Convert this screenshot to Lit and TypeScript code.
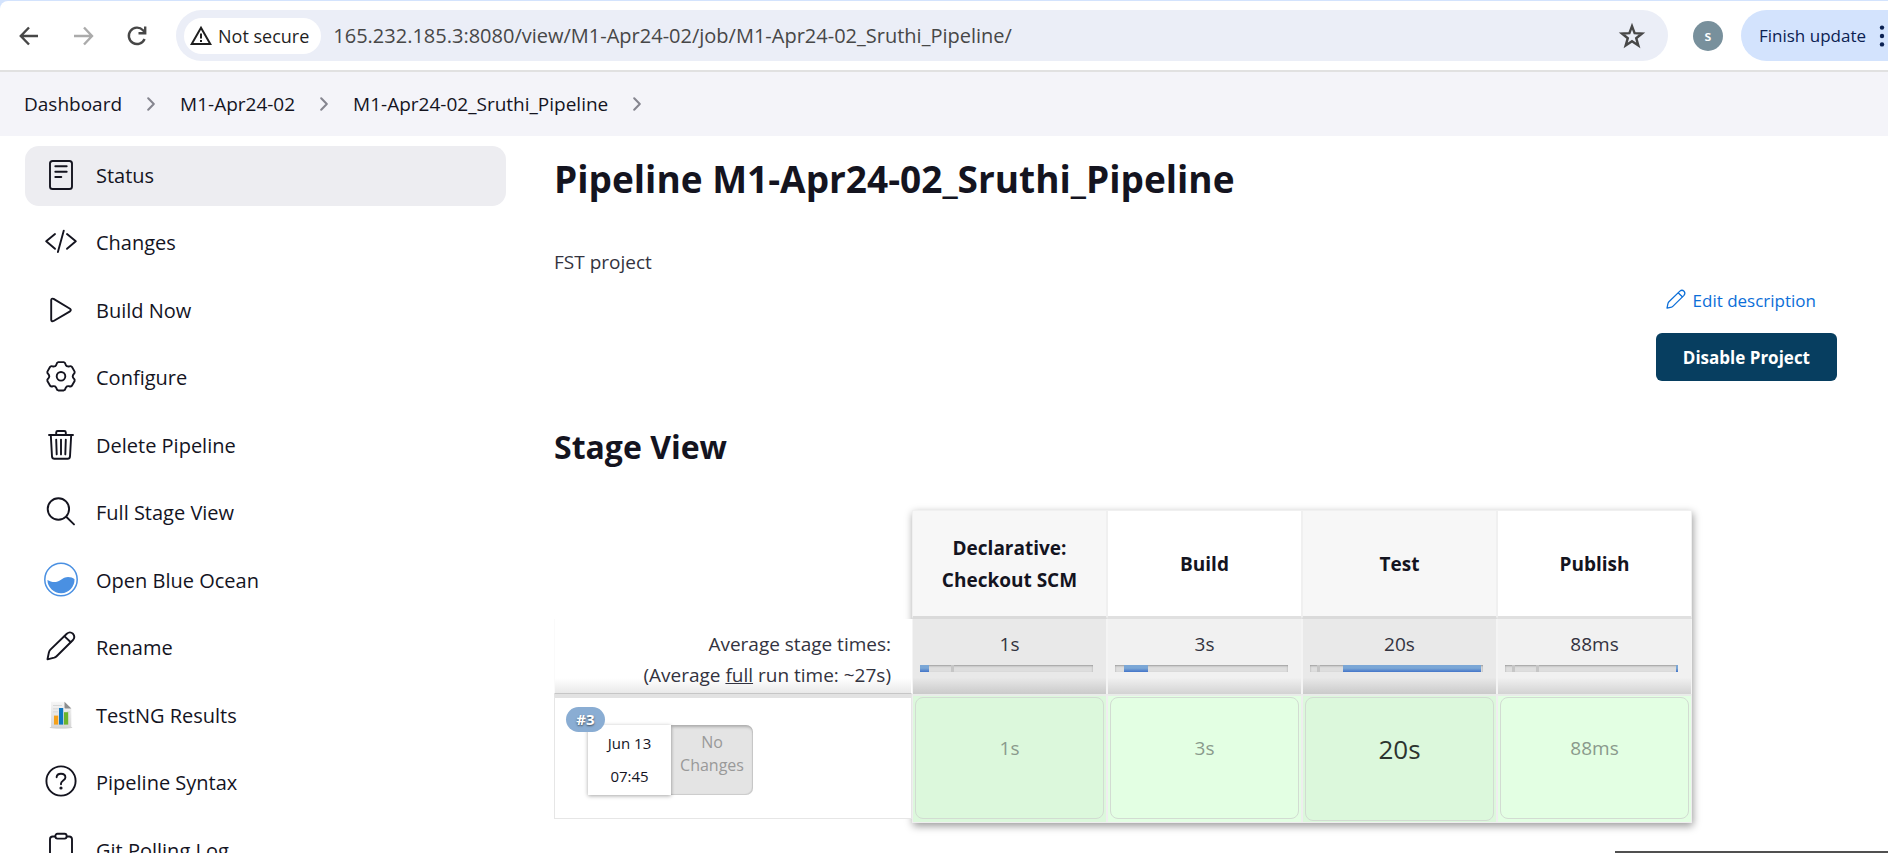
import { LitElement, html, css, svg, nothing } from "lit";
import type { SVGTemplateResult } from "lit";
import { customElement, property } from "lit/decorators.js";
import { classMap } from "lit/directives/class-map.js";
import { styleMap } from "lit/directives/style-map.js";

/** Outline of a six-lobed cog around (cx, cy). */
function cog(cx: number, cy: number): string {
  const pt = (r: number, deg: number) => {
    const a = (deg * Math.PI) / 180;
    return `${(cx + r * Math.cos(a)).toFixed(2)} ${(cy + r * Math.sin(a)).toFixed(2)}`;
  };
  let d = "";
  for (let k = 0; k < 6; k++) {
    const t = k * 60 - 90;
    d += `${k === 0 ? "M" : "L"}${pt(14.4, t - 11)} L${pt(14.4, t + 11)} `;
    d += `Q${pt(14.4, t + 17)} ${pt(13, t + 20)} Q${pt(12, t + 23)} ${pt(11.7, t + 30)} `;
    d += `Q${pt(12, t + 37)} ${pt(13, t + 40)} Q${pt(14.4, t + 43)} ${pt(14.4, t + 49)} `;
  }
  return d + "Z";
}

const pencil = svg`
  <path d="M4.5 30.3 5.9 23.4Q6.3 21.8 7.4 20.7L23.8 4.7Q27 2 30 4.8 32.6 7.8 30 11L13.6 27.2Q12.6 28.2 11.2 28.6Z"/>
  <path d="M21.6 7.4 27.5 13"/>`;

const icons: Record<string, SVGTemplateResult> = {
  status: svg`<rect x="7" y="4" width="22" height="28" rx="2.6"/>
    <path d="M12.3 9.3H23.7M12.3 14.7H23.7M12.3 20H18.3"/>`,
  code: svg`<path d="M12 10 3.2 17.3 12 24.8M24 10 32.8 17.3 24 24.8M20.8 6.6 14.9 28"/>`,
  play: svg`<path d="M8.2 8.2V27.6Q8.4 30 10.6 29L27 19.4Q28.6 18 27 16.7L10.6 6.9Q8.4 6 8.2 8.2Z"/>`,
  gear: svg`<path d="${cog(18, 17.3)}"/><circle cx="18" cy="17.3" r="4.3"/>`,
  trash: svg`<path d="M6 8H30M13.2 7.8V5.5Q13.2 4 14.7 4H21.3Q22.8 4 22.8 5.5V7.8"/>
    <path d="M7.8 8 9 29.4Q9.2 31.8 11.4 31.8H24.6Q26.8 31.8 27 29.4L28.2 8M13.2 12.6 13.7 27.4M18 12.6V27.4M22.8 12.6 22.3 27.4"/>`,
  search: svg`<circle cx="15.4" cy="15" r="10.7"/><path d="M23.2 22.8 31 30.4"/>`,
  ocean: svg`<circle cx="18" cy="17.5" r="16.2" stroke="#4a90e2" stroke-width="1.5"/>
    <path stroke="none" fill="#4a90e2" d="M4.4 18C7.6 19.8 11 20.8 14.6 19.6 18.4 18.2 20.6 15.2 25 15.1 27.6 15.1 30 16 31.5 17.2A13.5 13.5 0 0 1 4.4 18Z"/>`,
  pencil,
  report: svg`<defs><linearGradient id="pg" x1="0" y1="0" x2="0" y2="1">
      <stop offset="0" stop-color="#f6f6f6"/><stop offset="1" stop-color="#d6d6d6"/></linearGradient></defs>
    <g stroke="none"><ellipse cx="18" cy="30.6" rx="11.5" ry="1" fill="#c4c4c4"/>
    <path fill="url(#pg)" d="M8 4.8H21.5L28.3 11.5V29.5Q28.3 30.8 27 30.8H9.3Q8 30.8 8 29.5Z"/>
    <path fill="#8e8e8e" d="M21.5 4.8 28.3 11.5H22.6Q21.5 11.5 21.5 10.4Z"/>
    <path fill="#d0d0d0" d="M10 8.3H19V9.1H10ZM10 11.4H19V12.2H10ZM10 14.5H15V15.3H10ZM24 14.5H27V15.3H24Z"/>
    <rect x="11" y="18.6" width="4.2" height="9" fill="#f5a11a"/>
    <rect x="16" y="11" width="4.2" height="16.6" fill="#0f78c0"/>
    <rect x="21" y="15.2" width="4.2" height="12.4" fill="#6cb42c"/></g>`,
  help: svg`<circle cx="18" cy="17" r="14.6"/>
    <path d="M13.6 13.2C13.8 10.8 15.6 9.8 18 9.8 20.6 9.8 22.4 11.2 22.4 13.4 22.4 16.4 18 16.6 18 19.6V20.2"/>
    <circle cx="18" cy="24" r="1.6" stroke="none" fill="currentColor"/>`,
  clipboard: svg`<path d="M12 4.5H9.8Q7 4.5 7 7.3V30.2Q7 33 9.8 33H26.2Q29 33 29 30.2V7.3Q29 4.5 26.2 4.5H24"/>
    <rect x="12.4" y="1.8" width="11.2" height="4.8" rx="2"/>`,
};

@customElement("jenkins-icon")
class JenkinsIcon extends LitElement {
  @property() name = "";

  static styles = css`
    :host {
      display: block;
      flex: none;
    }
    .glyph {
      display: block;
      width: 100%;
      height: 100%;
      fill: none;
      stroke: currentColor;
      stroke-width: 1.9;
      stroke-linecap: round;
      stroke-linejoin: round;
    }
  `;

  render() {
    return html`<svg class="glyph" viewBox="0 0 36 36" aria-hidden="true">${icons[this.name] ?? nothing}</svg>`;
  }
}

@customElement("browser-bar")
class BrowserBar extends LitElement {
  static styles = css`
    :host {
      display: block;
      background: #d3e3fd;
      padding-top: 1px;
      border-bottom: 2px solid #e1e1e1;
    }
    .bar {
      display: flex;
      align-items: center;
      height: 69px;
      background: #fff;
      border-radius: 8px 0 0 0;
      padding-left: 16px;
      box-sizing: border-box;
    }
    button {
      font: inherit;
      color: inherit;
      border: 0;
      background: none;
      padding: 0;
      margin: 0;
      flex: none;
    }
    .nav {
      display: flex;
      gap: 26px;
      color: #474747;
      margin-right: 24px;
    }
    .nav svg,
    .star svg {
      display: block;
      width: 28px;
      height: 28px;
      fill: none;
      stroke: currentColor;
      stroke-width: 2.4;
    }
    .nav .off {
      color: #ababab;
    }
    .omni {
      display: flex;
      align-items: center;
      flex: 1;
      min-width: 0;
      height: 51px;
      border-radius: 26px;
      background: #ebeef7;
      padding: 0 22px 0 8px;
      box-sizing: border-box;
    }
    .chip {
      display: flex;
      align-items: center;
      gap: 6px;
      height: 36px;
      border-radius: 18px;
      background: #fff;
      padding: 0 12px 0 6px;
      font-size: 18px;
      font-weight: 500;
      color: #1f1f1f;
    }
    .chip svg {
      width: 22px;
      height: 22px;
      fill: none;
      stroke: currentColor;
      stroke-width: 2;
    }
    .url {
      flex: 1;
      min-width: 0;
      border: 0;
      outline: 0;
      background: none;
      padding: 0 0 0 12px;
      font: inherit;
      font-size: 20px;
      color: #474747;
    }
    .star {
      color: #474747;
    }
    .avatar {
      width: 30px;
      height: 30px;
      border-radius: 50%;
      background: #78909c;
      color: #fff;
      font-size: 14px;
      font-weight: 600;
      margin: 0 18px 0 25px;
    }
    .update {
      display: flex;
      align-items: center;
      gap: 10px;
      height: 51px;
      border-radius: 26px 0 0 26px;
      background: #d3e3fd;
      color: #0b2152;
      font-size: 17px;
      padding-left: 18px;
    }
    .update svg {
      width: 12px;
      height: 24px;
      fill: currentColor;
    }
  `;

  render() {
    return html`
      <div class="bar">
        <div class="nav">
          <button aria-label="Back">
            <svg viewBox="0 0 28 28"><path d="M22 14H5.5M13 5.5 4.8 14 13 22.5" /></svg>
          </button>
          <button class="off" aria-label="Forward" disabled>
            <svg viewBox="0 0 28 28"><path d="M4 14H21.500M14 5.500 22 14 14 22.500" /></svg>
          </button>
          <button aria-label="Reload">
            <svg viewBox="0 0 28 28">
              <path d="M20.600 17A8.200 8.200 0 1 1 19 8.200L21 10.500M21.200 4.500V11.300H14.500" />
            </svg>
          </button>
        </div>
        <div class="omni">
          <button class="chip">
            <svg viewBox="0 0 22 22"><path d="M11 2.800 20.300 19H1.700ZM11 8.600V13.400M11 15V17" /></svg>
            Not secure
          </button>
          <input
            class="url"
            type="text"
            aria-label="Address"
            .value=${"165.232.185.3:8080/view/M1-Apr24-02/job/M1-Apr24-02_Sruthi_Pipeline/"}
          />
          <button class="star" aria-label="Bookmark this page">
            <svg viewBox="0 0 28 28">
              <path d="M14 4.200 16.600 11.200 24 11.500 18.200 16.200 20.300 23.400 14 19.200 7.700 23.400 9.800 16.200 4 11.500 11.400 11.200Z" />
            </svg>
          </button>
        </div>
        <button class="avatar" aria-label="Profile">s</button>
        <button class="update">
          Finish update
          <svg viewBox="0 0 12 24">
            <circle cx="6" cy="3.600" r="2.200" /><circle cx="6" cy="12" r="2.200" /><circle cx="6" cy="20.400" r="2.200" />
          </svg>
        </button>
      </div>
    `;
  }
}

@customElement("side-panel")
class SidePanel extends LitElement {
  items = [
    ["status", "Status"],
    ["code", "Changes"],
    ["play", "Build Now"],
    ["gear", "Configure"],
    ["trash", "Delete Pipeline"],
    ["search", "Full Stage View"],
    ["ocean", "Open Blue Ocean"],
    ["pencil", "Rename"],
    ["report", "TestNG Results"],
    ["help", "Pipeline Syntax"],
    ["clipboard", "Git Polling Log"],
  ];

  static styles = css`
    :host {
      display: block;
    }
    ul {
      list-style: none;
      margin: 0;
      padding: 0;
    }
    li {
      margin-bottom: 7px;
    }
    li:nth-child(even) {
      margin-bottom: 8px;
    }
    .task {
      display: flex;
      align-items: center;
      gap: 17px;
      height: 60px;
      box-sizing: border-box;
      padding: 0 18px 2px;
      border-radius: 14px;
      color: #14141f;
      font-size: 20px;
      font-weight: 500;
      text-decoration: none;
    }
    .task.active {
      background: #ededf1;
    }
    jenkins-icon {
      width: 36px;
      height: 36px;
    }
  `;

  render() {
    return html`<nav aria-label="Tasks">
      <ul>
        ${this.items.map(
          ([icon, label], i) => html`<li>
            <a href="#" class=${classMap({ task: true, active: i === 0 })}>
              <jenkins-icon name=${icon}></jenkins-icon>${label}
            </a>
          </li>`
        )}
      </ul>
    </nav>`;
  }
}

interface Stage {
  name: string;
  avg: string;
  run: string;
  /** Share of the full run, in percent, for every stage up to this one. */
  start: number;
  size: number;
  ticks: number[];
}

@customElement("stage-view")
class StageView extends LitElement {
  stages: Stage[] = [
    { name: "Declarative: Checkout SCM", avg: "1s", run: "1s", start: 0, size: 5, ticks: [19] },
    { name: "Build", avg: "3s", run: "3s", start: 5, size: 14, ticks: [] },
    { name: "Test", avg: "20s", run: "20s", start: 19, size: 80, ticks: [5] },
    { name: "Publish", avg: "88ms", run: "88ms", start: 99, size: 1, ticks: [5, 19] },
  ];

  static styles = css`
    :host {
      display: block;
    }
    .wrap {
      position: relative;
      width: max-content;
    }
    .wrap::before {
      content: "";
      position: absolute;
      inset: 0 0 0 358px;
      box-shadow: 1px 3px 8px rgba(0, 0, 0, 0.4);
    }
    table {
      position: relative;
      table-layout: fixed;
      width: 1138px;
      border-spacing: 0;
      font-size: 19px;
      line-height: 31px;
      color: #333340;
    }
    .lead {
      width: 358px;
    }
    th,
    td {
      box-sizing: border-box;
      padding: 0;
      font-weight: 400;
    }
    .head {
      height: 109px;
      padding: 0 20px;
      font-size: 19px;
      line-height: 32px;
      font-weight: 700;
      color: #14141f;
      background: #fff;
      border: 1px solid #f0f0f0;
      border-bottom: 3px solid #e0e0e0;
    }
    .odd.head {
      background: #f7f7f7;
      border-bottom-color: #dadada;
    }
    .note {
      height: 75px;
      text-align: right;
      vertical-align: bottom;
      padding: 0 20px 2px 0;
      background: linear-gradient(#fff 80%, #e9e9e9);
      border-bottom: 1px solid #c6c6c6;
      border-left: 1px solid #fafafa;
      border-right: 1px solid #fff;
    }
    .avg {
      height: 75px;
      padding: 10px 7px 0;
      vertical-align: top;
      text-align: center;
      background: linear-gradient(#f1f1f1 78%, #d3d3d3);
      border: 0 solid #f4f4f4;
      border-width: 0 1px;
    }
    .odd.avg {
      background: linear-gradient(#e9e9e9 78%, #cacaca);
    }
    .track {
      position: relative;
      height: 7px;
      margin: 5px 6px 0 0;
      background: #dedede;
      box-shadow: inset 0 1px 2px rgba(0, 0, 0, 0.3);
    }
    .fill,
    .tick {
      position: absolute;
      top: 0;
      height: 7px;
    }
    .fill {
      background: linear-gradient(#7ba7d6 45%, #4374c8);
    }
    .tick {
      width: 3px;
      background: #c6c6c6;
    }
    .run {
      vertical-align: top;
      height: 129px;
      padding-bottom: 4px;
    }
    .build {
      height: 125px;
      box-sizing: border-box;
      border: 1px solid #e6e6e6;
      border-top: 4px solid #e2e2e2;
      background: #fff;
      padding: 9px 0 0 11px;
    }
    .badge {
      display: block;
      position: relative;
      width: 39px;
      height: 25px;
      border-radius: 13px;
      background: #8aadd3;
      color: #fff;
      font-size: 15px;
      line-height: 25px;
      font-weight: 700;
      text-align: center;
      text-decoration: none;
      text-shadow: 0 1px 2px rgba(0, 0, 0, 0.6);
    }
    .boxes {
      display: flex;
      height: 70px;
      margin: -7px 0 0 22px;
      text-align: center;
    }
    .date {
      width: 83px;
      font-size: 15px;
      line-height: 33px;
      padding-top: 2px;
      box-sizing: border-box;
      background: #fff;
      color: #14141f;
      box-shadow: 0 1px 4px rgba(0, 0, 0, 0.35);
    }
    .changes {
      width: 82px;
      box-sizing: border-box;
      padding-top: 6px;
      font-size: 16px;
      line-height: 23px;
      color: #999;
      background: #e4e4e4;
      border-radius: 0 7px 7px 0;
      box-shadow: inset 1px 2px 3px rgba(0, 0, 0, 0.25), inset -1px -1px 1px rgba(0, 0, 0, 0.1);
    }
    .stage {
      vertical-align: top;
      height: 129px;
      padding: 1px 2px 0;
      background: #e3ffe3;
      border: 1px solid #eee;
      border-top: 2px solid #e9ece9;
    }
    .odd.stage {
      background: #dcf8dc;
    }
    .cell {
      display: flex;
      align-items: center;
      justify-content: center;
      height: 122px;
      box-sizing: border-box;
      padding-bottom: 19px;
      border: 1px solid #d2dcd2;
      border-radius: 8px;
      color: #8a9a8c;
    }
    .cell.slow {
      height: 124px;
      font-size: 26px;
      color: #2c342f;
    }
  `;

  render() {
    const tone = (base: string, i: number) => classMap({ [base]: true, odd: i % 2 === 0 });
    return html`<div class="wrap">
      <table>
        <thead>
          <tr>
            <td class="lead"></td>
            ${this.stages.map((s, i) => html`<th scope="col" class=${tone("head", i)}>${s.name}</th>`)}
          </tr>
        </thead>
        <tbody>
          <tr>
            <th scope="row" class="note">Average stage times:<br />(Average <u>full</u> run time: ~27s)</th>
            ${this.stages.map(
              (s, i) => html`<td class=${tone("avg", i)}>
                ${s.avg}
                <div class="track">
                  ${s.ticks.map((t) => html`<span class="tick" style=${styleMap({ left: `${t - 1}%` })}></span>`)}
                  <span class="fill" style=${styleMap({ left: `${s.start}%`, width: `${s.size}%` })}></span>
                </div>
              </td>`
            )}
          </tr>
          <tr>
            <th scope="row" class="run">
              <div class="build">
                <a class="badge" href="#">#3</a>
                <div class="boxes">
                  <div class="date">Jun 13<br />07:45</div>
                  <div class="changes">No<br />Changes</div>
                </div>
              </div>
            </th>
            ${this.stages.map(
              (s, i) => html`<td class=${tone("stage", i)}>
                <div class=${classMap({ cell: true, slow: s.size > 50 })}>${s.run}</div>
              </td>`
            )}
          </tr>
        </tbody>
      </table>
    </div>`;
  }
}

@customElement("app-root")
class AppRoot extends LitElement {
  crumbs = ["Dashboard", "M1-Apr24-02", "M1-Apr24-02_Sruthi_Pipeline"];

  static styles = css`
    :host {
      display: block;
      position: relative;
      height: 100vh;
      overflow: hidden;
      background: #fff;
      color: #14141f;
      font-family: "Open Sans", "Noto Sans", sans-serif;
      font-size: 19px;
    }
    .crumbs {
      display: flex;
      align-items: center;
      gap: 25px;
      height: 64px;
      margin: 0;
      padding: 0 24px;
      background: #f4f4f9;
      list-style: none;
      font-size: 19px;
      font-weight: 500;
    }
    .crumbs li {
      display: flex;
      align-items: center;
      gap: 25px;
    }
    .crumbs a {
      color: inherit;
      text-decoration: none;
    }
    .crumbs svg {
      width: 8px;
      height: 14px;
      fill: none;
      stroke: #85858f;
      stroke-width: 2;
      stroke-linecap: round;
      stroke-linejoin: round;
    }
    .page {
      display: grid;
      grid-template-columns: 481px minmax(0, 1fr);
      gap: 48px;
      padding: 10px 51px 0 25px;
    }
    h1 {
      margin: 6px 0 0;
      font-size: 37px;
      line-height: 54px;
      font-weight: 700;
    }
    h2 {
      margin: 42px 0 39px;
      font-size: 32px;
      line-height: 48px;
      font-weight: 700;
    }
    .desc {
      margin: 41px 0 0;
      line-height: 30px;
      color: #333340;
    }
    .actions {
      display: flex;
      flex-direction: column;
      align-items: flex-end;
      gap: 18px;
      margin-top: 8px;
    }
    .edit {
      display: flex;
      align-items: center;
      gap: 5px;
      height: 30px;
      margin-right: 21px;
      color: #0b6ed8;
      font-size: 17px;
      font-weight: 500;
      text-decoration: none;
    }
    .edit jenkins-icon {
      width: 24px;
      height: 24px;
    }
    .disable {
      height: 48px;
      padding: 0 27px;
      border: 0;
      border-radius: 6px;
      background: #073e60;
      color: #fff;
      font: inherit;
      font-size: 17px;
      font-weight: 700;
    }
    .edge {
      position: absolute;
      right: 0;
      bottom: 0;
      width: 273px;
      height: 2px;
      background: #505050;
    }
  `;

  render() {
    return html`
      <browser-bar></browser-bar>
      <ol class="crumbs">
        ${this.crumbs.map(
          (c) => html`<li>
            <a href="#">${c}</a>
            <svg viewBox="0 0 8 14" aria-hidden="true"><path d="M1.200 1.200 6.800 7 1.200 12.800" /></svg>
          </li>`
        )}
      </ol>
      <div class="page">
        <side-panel></side-panel>
        <main>
          <h1>Pipeline M1-Apr24-02_Sruthi_Pipeline</h1>
          <p class="desc">FST project</p>
          <div class="actions">
            <a class="edit" href="#"><jenkins-icon name="pencil"></jenkins-icon>Edit description</a>
            <button class="disable">Disable Project</button>
          </div>
          <h2>Stage View</h2>
          <stage-view></stage-view>
        </main>
      </div>
      <div class="edge"></div>
    `;
  }
}
